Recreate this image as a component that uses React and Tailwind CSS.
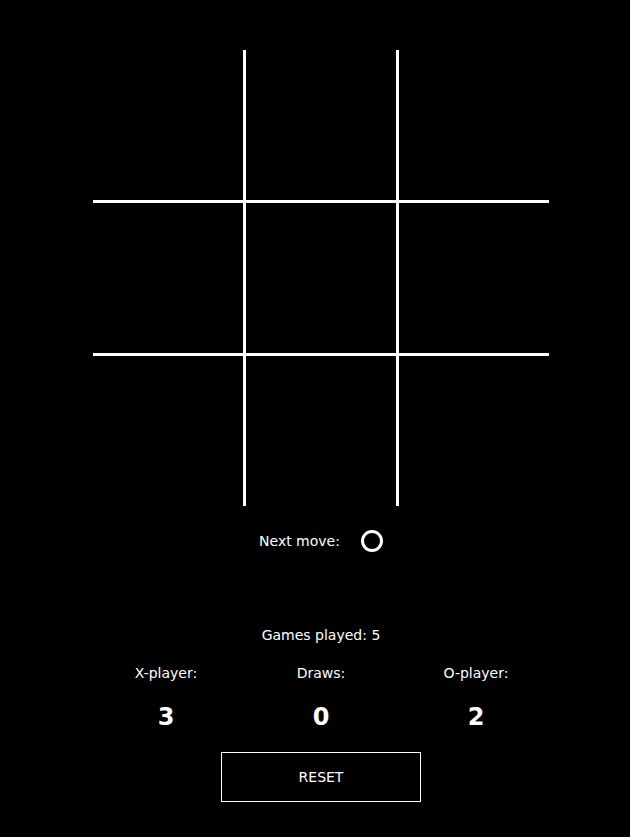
const board = ["", "", "", "", "", "", "", "", ""];

const stats = [
  { label: "X-player:", value: 3 },
  { label: "Draws:", value: 0 },
  { label: "O-player:", value: 2 },
];

export default function App() {
  return (
    <div
      className="min-h-screen bg-black text-white pl-3 pt-[50px] flex flex-col items-center"
      style={{ fontFamily: '"DejaVu Sans", "Liberation Sans", sans-serif' }}
    >
      {/* Board */}
      <div className="grid grid-cols-[repeat(3,150px)] grid-rows-[repeat(3,150px)] gap-[3px] bg-white">
        {board.map((cell, i) => (
          <button key={i} className="bg-black">
            {cell}
          </button>
        ))}
      </div>

      {/* Next move */}
      <div className="mt-[23px] h-6 flex items-center gap-[21px] text-[14px]">
        <span>Next move:</span>
        <span className="w-[22px] h-[22px] rounded-full border-[3px] border-white"></span>
      </div>

      {/* Score */}
      <p className="mt-[72px] text-[14px] leading-5">Games played: 5</p>
      <div className="mt-[18px] grid grid-cols-[repeat(3,155px)] text-center">
        {stats.map((s) => (
          <div key={s.label} className="flex flex-col items-center">
            <span className="text-[14px] leading-5">{s.label}</span>
            <span className="mt-[18px] text-[24px] leading-8 font-bold">
              {s.value}
            </span>
          </div>
        ))}
      </div>

      <button className="mt-[19px] w-[200px] h-[50px] border border-white text-[14px]">
        RESET
      </button>
    </div>
  );
}
